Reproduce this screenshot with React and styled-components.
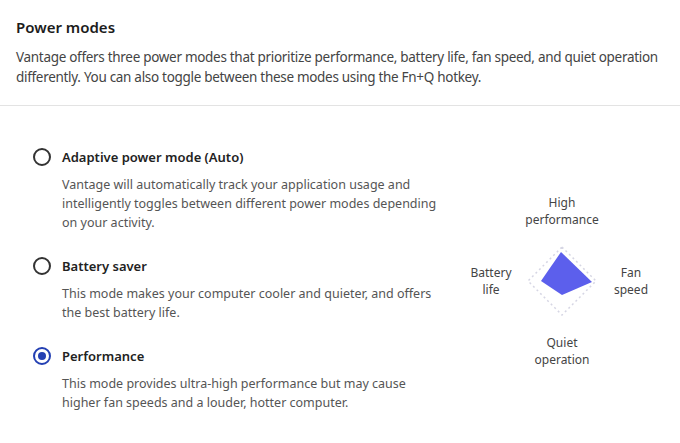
import React from "react";
import styled, { createGlobalStyle } from "styled-components";

const Global = createGlobalStyle`
  html, body { margin: 0; padding: 0; background: #fff; }
  body { font-family: "Noto Sans", "Open Sans", sans-serif; color: #222; }
`;

const Page = styled.div`
  width: 680px;
  height: 443px;
  overflow: hidden;
  background: #fff;
`;

const Header = styled.header`
  padding: 16px 16px 18px;
  border-bottom: 1px solid #e3e3e3;
`;

const Title = styled.h2`
  margin: 0;
  font-size: 15px;
  line-height: 22px;
  font-weight: 600;
  color: #1c1c1c;
`;

const Intro = styled.p`
  margin: 9px 0 0;
  font-size: 13.5px;
  line-height: 20px;
  letter-spacing: -0.3px;
  color: #444;
`;

const Body = styled.section`
  display: flex;
  align-items: flex-start;
  padding: 41px 21px 0 33px;
`;

const Options = styled.div`
  width: 415px;
  display: flex;
  flex-direction: column;
  gap: 24px;
`;

const Option = styled.div`
  display: flex;
  flex-direction: column;
`;

const OptionHead = styled.label`
  display: flex;
  align-items: center;
  gap: 11px;
  height: 20px;
  cursor: pointer;
`;

const Radio = styled.span`
  box-sizing: border-box;
  width: 18px;
  height: 18px;
  border-radius: 50%;
  border: 2px solid ${(p) => (p.$checked ? "#2440b3" : "#333")};
  display: flex;
  align-items: center;
  justify-content: center;
  &::after {
    content: "";
    width: 8px;
    height: 8px;
    border-radius: 50%;
    background: ${(p) => (p.$checked ? "#2440b3" : "transparent")};
  }
`;

const OptionLabel = styled.span`
  font-size: 13px;
  font-weight: 600;
  color: #222;
`;

const OptionDesc = styled.p`
  margin: 8px 0 0 29px;
  max-width: 378px;
  font-size: 12.5px;
  line-height: 19px;
  color: #555;
`;

const Chart = styled.div`
  margin: 47px 0 0 auto;
  display: grid;
  grid-template-columns: 60px 82px 56px;
  grid-template-rows: 34px 82px 34px;
  row-gap: 12px;
  align-items: center;
  justify-items: center;
  font-size: 12px;
  line-height: 17px;
  color: #444;
  text-align: center;
`;

const AxisLabel = styled.span`
  grid-column: ${(p) => p.$col};
  grid-row: ${(p) => p.$row};
`;

const Diamond = styled.svg`
  grid-column: 2;
  grid-row: 2;
  display: block;
`;

const options = [
  {
    label: "Adaptive power mode (Auto)",
    desc: "Vantage will automatically track your application usage and intelligently toggles between different power modes depending on your activity.",
  },
  {
    label: "Battery saver",
    desc: "This mode makes your computer cooler and quieter, and offers the best battery life.",
  },
  {
    label: "Performance",
    desc: "This mode provides ultra-high performance but may cause higher fan speeds and a louder, hotter computer.",
    checked: true,
  },
];

export default function App() {
  return (
    <Page>
      <Global />
      <Header>
        <Title>Power modes</Title>
        <Intro>
          Vantage offers three power modes that prioritize performance, battery life, fan speed, and quiet operation
          differently. You can also toggle between these modes using the Fn+Q hotkey.
        </Intro>
      </Header>
      <Body>
        <Options>
          {options.map((o) => (
            <Option key={o.label}>
              <OptionHead>
                <Radio $checked={o.checked} />
                <OptionLabel>{o.label}</OptionLabel>
              </OptionHead>
              <OptionDesc>{o.desc}</OptionDesc>
            </Option>
          ))}
        </Options>
        <Chart>
          <AxisLabel $col={2} $row={1}>High<br />performance</AxisLabel>
          <AxisLabel $col={1} $row={2}>Battery<br />life</AxisLabel>
          <Diamond width="82" height="82" viewBox="0 0 82 82">
            <polygon
              points="41,7 75,41 41,75 7,41"
              fill="none"
              stroke="#d6d6e4"
              strokeWidth="1.5"
              strokeDasharray="2 3"
            />
            <polygon points="40,12 71,42 41,55 20,41" fill="#5c5fec" />
          </Diamond>
          <AxisLabel $col={3} $row={2}>Fan<br />speed</AxisLabel>
          <AxisLabel $col={2} $row={3}>Quiet<br />operation</AxisLabel>
        </Chart>
      </Body>
    </Page>
  );
}
